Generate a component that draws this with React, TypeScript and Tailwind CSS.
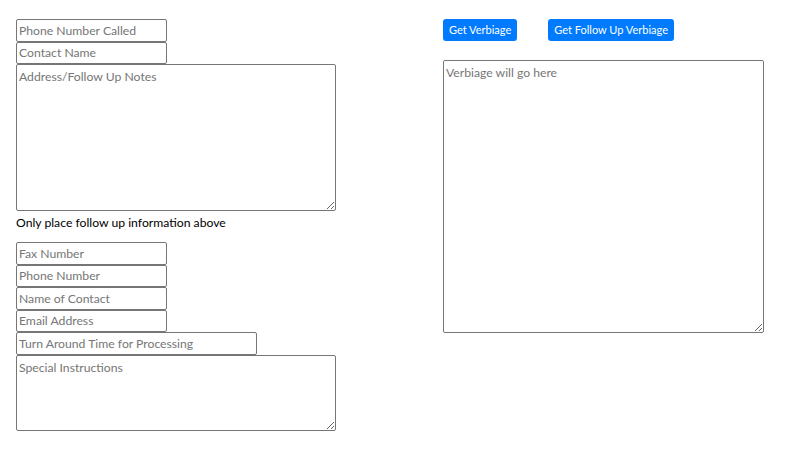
import React from "react";

const field =
  "block h-[22.5px] border border-[#767676] rounded-[2px] px-[2px] text-[12.2px] text-black placeholder:text-[#767676] outline-none";
const area =
  "block border border-[#767676] rounded-[2px] px-[2px] pt-[3px] text-[12.2px] text-black placeholder:text-[#767676] outline-none";

const App = () => {
  return (
    <div
      className="flex pl-4 pt-[19px] bg-white min-h-[463px]"
      style={{ fontFamily: 'Lato, "Open Sans", sans-serif' }}
    >
      {/* left column: follow up + contact fields */}
      <div className="w-[427px] flex flex-col">
        <input className={`${field} w-[151px]`} placeholder="Phone Number Called" />
        <input className={`${field} w-[151px]`} placeholder="Contact Name" />
        <textarea className={`${area} w-[320px] h-[147px]`} placeholder="Address/Follow Up Notes" />
        <p className="text-[12.2px] text-black mt-[3px] leading-[17px]">
          Only place follow up information above
        </p>
        <div className="mt-[11px] flex flex-col">
          <input className={`${field} w-[151px]`} placeholder="Fax Number" />
          <input className={`${field} w-[151px]`} placeholder="Phone Number" />
          <input className={`${field} w-[151px]`} placeholder="Name of Contact" />
          <input className={`${field} w-[151px]`} placeholder="Email Address" />
          <input className={`${field} w-[241px]`} placeholder="Turn Around Time for Processing" />
          <textarea className={`${area} w-[320px] h-[76px]`} placeholder="Special Instructions" />
        </div>
      </div>

      {/* right column: verbiage */}
      <div className="flex flex-col">
        <div className="flex gap-[31px]">
          <button className="h-[22px] px-[6px] bg-[#007bff] text-white text-[11px] rounded-[3px]">
            Get Verbiage
          </button>
          <button className="h-[22px] px-[6px] bg-[#007bff] text-white text-[11px] rounded-[3px]">
            Get Follow Up Verbiage
          </button>
        </div>
        <textarea
          className={`${area} mt-[19px] w-[321px] h-[273px]`}
          placeholder="Verbiage will go here"
        />
      </div>
    </div>
  );
};

export default App;
